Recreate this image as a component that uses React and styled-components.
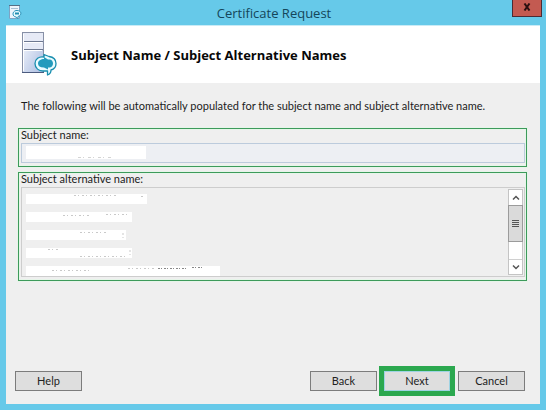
import React from "react";
import styled, { createGlobalStyle } from "styled-components";

const GlobalStyle = createGlobalStyle`
  * { box-sizing: border-box; }
  body {
    margin: 0;
    font-family: Lato, "Open Sans", sans-serif;
    font-size: 11px;
    line-height: 16px;
    color: #1c1c1c;
  }
`;

const Window = styled.div`
  display: flex;
  flex-direction: column;
  min-height: 100vh;
  padding: 0 6px 6px;
  background: #66c9e9;
`;

const TitleBar = styled.header`
  display: grid;
  grid-template-columns: 30px 1fr 30px;
  align-items: center;
  height: 25px;
  margin-right: -2px;
`;

const TitleIcon = styled.svg`
  width: 14px;
  height: 16px;
  margin-left: 2px;
  margin-bottom: 2px;
`;

const Title = styled.h1`
  margin: 0;
  font-family: "Open Sans", "Noto Sans", sans-serif;
  font-size: 13px;
  line-height: 24px;
  font-weight: 400;
  text-align: center;
  color: #14465a;
`;

const CloseButton = styled.button`
  align-self: start;
  display: flex;
  align-items: center;
  justify-content: center;
  height: 17px;
  padding: 0 0 2px;
  border: 1px solid #4d2a33;
  border-top: 0;
  background: #c35a51;
`;

const Client = styled.main`
  flex: 1;
  display: flex;
  flex-direction: column;
  border-top: 1px solid #c9ebf6;
  background: #efefef;
`;

const Banner = styled.div`
  display: flex;
  align-items: center;
  gap: 14px;
  height: 57px;
  padding: 0 15px;
  background: #fff;
`;

const BannerIcon = styled.svg`
  width: 36px;
  height: 45px;
`;

const Heading = styled.h2`
  margin: 0;
  font-family: "Open Sans", "Noto Sans", sans-serif;
  font-size: 13px;
  line-height: 20px;
  font-weight: 700;
  color: #080808;
`;

const Content = styled.div`
  padding: 15px 13px 0 12px;
`;

const Intro = styled.p`
  margin: 0 3px 14px;
`;

const Group = styled.div`
  margin-bottom: 5px;
  padding: 0 1px 3px 2px;
  border: 1px solid #3d9a5b;
  box-shadow: 0 0 0 1px #e6f5e9, inset 0 0 0 1px #e6f5e9;
`;

const Label = styled.label`
  display: block;
  height: 14px;
  line-height: 12px;
`;

const Field = styled.div`
  position: relative;
`;

const TextBox = styled.input`
  display: block;
  width: 100%;
  height: 20px;
  padding: 0 4px;
  border: 1px solid #bccbdc;
  background: #edeff3;
  font: inherit;
`;

const Redaction = styled.svg`
  display: block;
  width: ${(p) => p.$width}px;
  height: ${(p) => p.$height}px;
  background: #fff;
`;

const FieldRedaction = styled(Redaction)`
  position: absolute;
  top: 3px;
  left: 5px;
`;

const ListBox = styled.div`
  display: flex;
  justify-content: space-between;
  height: 90px;
  padding: 1px;
  border: 1px solid #cdcdcd;
`;

const Names = styled.ul`
  display: grid;
  align-content: start;
  gap: 8px;
  margin: 0;
  padding: 5px 3px 0;
  list-style: none;
`;

const ScrollBar = styled.div`
  display: flex;
  flex-direction: column;
  width: 15px;
  border: 1px solid #c4c4c4;
  background: #fff;
`;

const ScrollButton = styled.button`
  display: flex;
  align-items: center;
  justify-content: center;
  height: 15px;
  padding: 0;
  border: 0;
  border-top: ${(p) => (p.$divided ? "1px solid #d0d0d0" : "0")};
  margin-top: ${(p) => (p.$divided ? "auto" : "0")};
  background: #fff;
`;

const Thumb = styled.div`
  display: flex;
  align-items: center;
  justify-content: center;
  height: 37px;
  margin: 0 -1px;
  border: 1px solid #9b9b9b;
  background: #dadada;
`;

const Footer = styled.footer`
  display: flex;
  align-items: center;
  gap: 2px;
  margin-top: auto;
  padding: 0 15px 8px 9px;
`;

const Button = styled.button`
  width: ${(p) => (p.$primary ? 66 : 67)}px;
  height: 20px;
  padding: 0;
  border: 1px solid ${(p) => (p.$primary ? "#9fd3e3" : "#7c7c7c")};
  background: #dedede;
  color: #222;
  font: inherit;
`;

const HelpButton = styled(Button)`
  margin-right: auto;
`;

const Highlight = styled.div`
  display: flex;
  margin-right: 1px;
  border: 5px solid #2ba84f;
`;

function ServerDrawing() {
  return (
    <>
      <defs>
        <linearGradient id="case" x1="0" y1="0" x2="1" y2="1">
          <stop offset="0" stopColor="#fbfcff" />
          <stop offset="1" stopColor="#a9bbe0" />
        </linearGradient>
      </defs>
      <rect x="1.5" y="0.5" width="21" height="40" fill="url(#case)" stroke="#8790a6" />
      <path d="M2 1h20v8H2zM2 10h20v7H2z" fill="#e6eaf6" />
      <path d="M2 9.500h20M2 17.500h20" stroke="#6d7890" />
      <path d="M3 10.500h18M3 18.500h18M2.500 2v37" stroke="#fff" />
      <path d="M1 40.500h22" stroke="#4c5b7f" />
      <path
        d="M23 22.500v2.500c-5-1-9 2-9 6.500 0 5 4 7.500 8 7.500h4.500v4c3-1 3.500-3 3.500-5 4-1 5-3.500 5-6.500 0-4-3-6.500-7-7z"
        fill="#e9fbff"
        stroke="#188eaf"
        strokeWidth="1.300"
        strokeLinejoin="round"
      />
      <path
        d="M17 31.500c0-3 3-4.500 6-4.500v-2l4 2.500h2c4 1 4 7 0 8h-2v2l-4-2c-4 0-6-1.500-6-4z"
        fill="#239bbd"
      />
    </>
  );
}

function Chevron({ down }) {
  return (
    <svg width="8" height="6" viewBox="0 0 8 6" aria-hidden="true">
      <path
        d={down ? "M1 1.500 4 4.500 7 1.500" : "M1 4.500 4 1.500 7 4.500"}
        fill="none"
        stroke="#555"
        strokeWidth="1.500"
      />
    </svg>
  );
}

const names = [
  { width: 121, specks: "M48 1.500h42M115 2.500h3" },
  { width: 106, specks: "M37 3.500h28M80 2.500h22" },
  { width: 100, specks: "M54 2.500h28M97 3v5" },
  { width: 106, specks: "M22 1.500h10M54 8.500h46M104 2v6" },
  { width: 194, specks: "M26 4.500h38M102 2.500h28" , dark: "M132 2.500h28M166 1.500h10" },
];

export default function App() {
  return (
    <>
      <GlobalStyle />
      <Window>
        <TitleBar>
          <TitleIcon viewBox="0 0 14 16" aria-hidden="true">
            <path d="M1.500 1.500h10v13h-10z" fill="#eef4fb" stroke="#7da3c4" />
            <path d="M1 1.500h11" stroke="#566f85" />
            <path d="M3 4.500h7" stroke="#a9c0d4" />
            <path
              d="M8 6.500c-4 1-4 6 0 6.500l2 1.500v-2c4-1 4-6-1-6z"
              fill="#e9fbff"
              stroke="#2a94bb"
            />
            <path d="M7 9.500h4" stroke="#218cb0" strokeWidth="2" />
          </TitleIcon>
          <Title>Certificate Request</Title>
          <CloseButton aria-label="Close">
            <svg width="8" height="8" viewBox="0 0 8 8" aria-hidden="true">
              <path d="M1.500 .5 6.500 7.500M6.500 .5 1.500 7.500" stroke="#2b1010" strokeWidth="2" />
            </svg>
          </CloseButton>
        </TitleBar>
        <Client>
          <Banner>
            <BannerIcon viewBox="0 0 36 45" aria-hidden="true">
              <ServerDrawing />
            </BannerIcon>
            <Heading>Subject Name / Subject Alternative Names</Heading>
          </Banner>
          <Content>
            <Intro>
              The following will be automatically populated for the subject name and subject
              alternative name.
            </Intro>
            <Group>
              <Label htmlFor="subject">Subject name:</Label>
              <Field>
                <TextBox id="subject" readOnly />
                <FieldRedaction $width={120} $height={13} aria-hidden="true">
                  <path d="M52 11.500h34" stroke="#d4d4d4" strokeDasharray="3 2 1 4" />
                </FieldRedaction>
              </Field>
            </Group>
            <Group>
              <Label as="div" id="alternative">
                Subject alternative name:
              </Label>
              <ListBox>
                <Names aria-labelledby="alternative">
                  {names.map((name, i) => (
                    <li key={i}>
                      <Redaction $width={name.width} $height={10} aria-hidden="true">
                        <path d={name.specks} stroke="#c9c9c9" strokeDasharray="2 2 1 3" />
                        {name.dark && (
                          <path d={name.dark} stroke="#888" strokeDasharray="2 1 1 2" />
                        )}
                      </Redaction>
                    </li>
                  ))}
                </Names>
                <ScrollBar>
                  <ScrollButton aria-label="Scroll up">
                    <Chevron />
                  </ScrollButton>
                  <Thumb>
                    <svg width="7" height="8" viewBox="0 0 7 8" aria-hidden="true">
                      <path d="M0 .5h7M0 2.500h7M0 4.500h7M0 6.500h7" stroke="#555" />
                    </svg>
                  </Thumb>
                  <ScrollButton $divided aria-label="Scroll down">
                    <Chevron down />
                  </ScrollButton>
                </ScrollBar>
              </ListBox>
            </Group>
          </Content>
          <Footer>
            <HelpButton>Help</HelpButton>
            <Button>Back</Button>
            <Highlight>
              <Button $primary>Next</Button>
            </Highlight>
            <Button>Cancel</Button>
          </Footer>
        </Client>
      </Window>
    </>
  );
}
